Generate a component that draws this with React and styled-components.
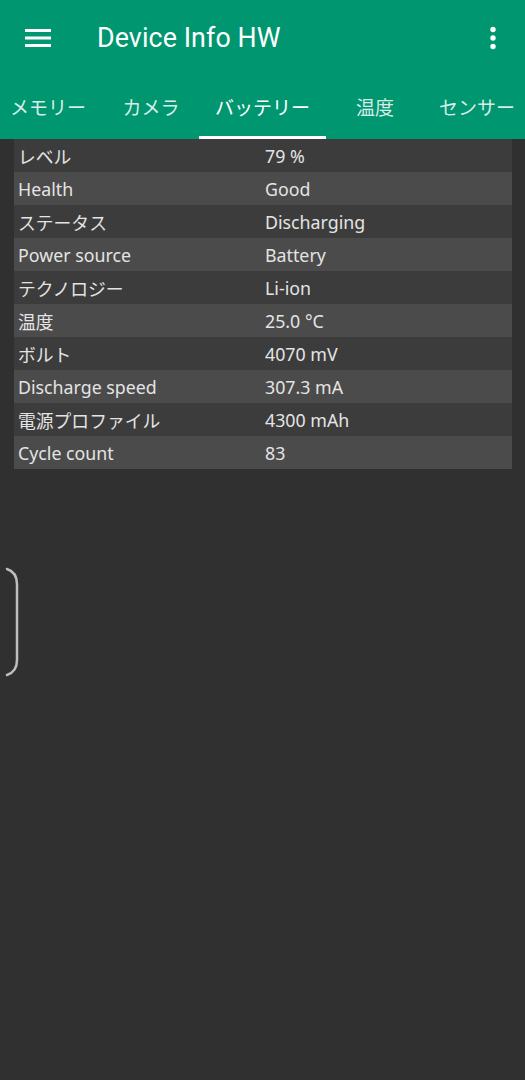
import React from "react";
import styled, { createGlobalStyle } from "styled-components";

const Global = createGlobalStyle`
  html, body { margin: 0; padding: 0; background: #303030; }
  body { font-family: "Noto Sans", "Noto Sans CJK JP", sans-serif; }
  #root { min-height: 1080px; }
`;

const Page = styled.div`
  position: relative;
  width: 525px;
  height: 1080px;
  background: #303030;
  overflow: hidden;
`;

const Header = styled.header`
  background: #009670;
  height: 139px;
  display: flex;
  flex-direction: column;
`;

const Toolbar = styled.div`
  height: 76px;
  display: flex;
  align-items: center;
  padding: 0 18px 0 24px;
`;

const IconButton = styled.div`
  width: 28px;
  height: 28px;
  display: flex;
  align-items: center;
  justify-content: center;
  flex: none;
`;

const Title = styled.h1`
  margin: 0 0 0 45px;
  flex: 1;
  font-family: Roboto, "Noto Sans", sans-serif;
  font-weight: 400;
  font-size: 26.8px;
  color: #ffffff;
  letter-spacing: 0.1px;
`;

const Tabs = styled.nav`
  display: flex;
  margin-left: -7px;
  height: 63px;
`;

const Tab = styled.div`
  position: relative;
  width: ${(p) => p.$w}px;
  flex: none;
  display: flex;
  align-items: center;
  justify-content: center;
  padding-bottom: 2px;
  font-family: "Noto Sans CJK JP", "Noto Sans", sans-serif;
  font-size: 19px;
  color: ${(p) => (p.$active ? "#ffffff" : "rgba(255,255,255,0.85)")};
  ${(p) =>
    p.$active &&
    `&::after {
      content: "";
      position: absolute;
      left: 0; right: 0; bottom: 0;
      height: 3px;
      background: #ffffff;
    }`}
`;

const Table = styled.div`
  margin: 0 13px 0 14px;
  display: flex;
  flex-direction: column;
`;

const Row = styled.div`
  height: 33px;
  display: grid;
  grid-template-columns: 247px 1fr;
  align-items: center;
  padding-left: 4px;
  padding-top: 1px;
  box-sizing: border-box;
  background: ${(p) => (p.$alt ? "#4b4b4b" : "#3c3c3c")};
  color: #e4e4e4;
  font-family: "Noto Sans", "Noto Sans CJK JP", sans-serif;
  font-size: 17.8px;
`;

const Cell = styled.span`
  white-space: nowrap;
`;

const EdgeHandle = styled.svg`
  position: absolute;
  left: 5px;
  top: 566px;
`;

const rows = [
  ["レベル", "79 %"],
  ["Health", "Good"],
  ["ステータス", "Discharging"],
  ["Power source", "Battery"],
  ["テクノロジー", "Li-ion"],
  ["温度", "25.0 °C"],
  ["ボルト", "4070 mV"],
  ["Discharge speed", "307.3 mA"],
  ["電源プロファイル", "4300 mAh"],
  ["Cycle count", "83"],
];

const tabs = [
  ["メモリー", 110],
  ["カメラ", 96],
  ["バッテリー", 127, true],
  ["温度", 98],
  ["センサー", 106],
];

export default function App() {
  return (
    <Page>
      <Global />
      <Header>
        <Toolbar>
          <IconButton>
            <svg width="26" height="20" viewBox="0 0 26 20">
              <rect x="0" y="1" width="26" height="3" fill="#fff" />
              <rect x="0" y="8.5" width="26" height="3" fill="#fff" />
              <rect x="0" y="16" width="26" height="3" fill="#fff" />
            </svg>
          </IconButton>
          <Title>Device Info HW</Title>
          <IconButton>
            <svg width="8" height="24" viewBox="0 0 8 24">
              <circle cx="4" cy="3.5" r="2.7" fill="#fff" />
              <circle cx="4" cy="12" r="2.7" fill="#fff" />
              <circle cx="4" cy="20.5" r="2.7" fill="#fff" />
            </svg>
          </IconButton>
        </Toolbar>
        <Tabs>
          {tabs.map(([t, w, a]) => (
            <Tab key={t} $w={w} $active={a}>
              {t}
            </Tab>
          ))}
        </Tabs>
      </Header>
      <Table>
        {rows.map(([k, v], i) => (
          <Row key={k} $alt={i % 2 === 1}>
            <Cell>{k}</Cell>
            <Cell>{v}</Cell>
          </Row>
        ))}
      </Table>
      <EdgeHandle width="16" height="112" viewBox="0 0 16 112">
        <path
          d="M2 3 C8 5 12 9 12 18 L12 94 C12 103 8 107 2 109"
          fill="none"
          stroke="#bdbdbd"
          strokeWidth="2.5"
          strokeLinecap="round"
        />
      </EdgeHandle>
    </Page>
  );
}
